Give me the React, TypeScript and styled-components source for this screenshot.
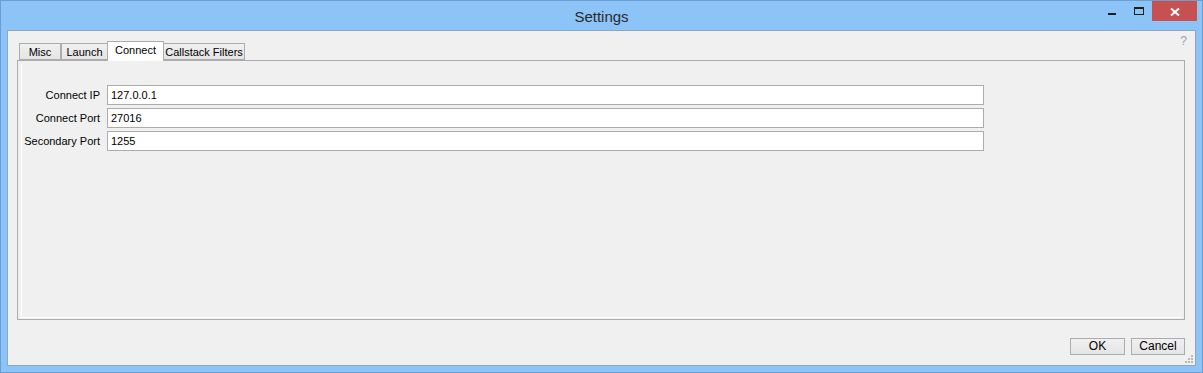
import React from "react";
import styled, { createGlobalStyle } from "styled-components";

const GlobalStyle = createGlobalStyle`
  html, body {
    margin: 0;
    padding: 0;
    background: #8cc4f8;
  }
  body {
    font-family: "Liberation Sans", Arial, sans-serif;
    font-size: 11px;
    color: #000;
  }
`;

const Window = styled.div`
  width: 1203px;
  height: 373px;
  box-sizing: border-box;
  border: 1px solid #6d9ed3;
  background: #8cc4f8;
  display: flex;
  flex-direction: column;
`;

const TitleBar = styled.div`
  height: 29px;
  display: grid;
  grid-template-columns: 1fr auto 1fr;
  align-items: center;
`;

const Title = styled.span`
  grid-column: 2;
  font-size: 15px;
  color: #2a2a2a;
  padding-top: 1px;
`;

const Caption = styled.div`
  grid-column: 3;
  justify-self: end;
  align-self: start;
  display: flex;
  margin-right: 5px;
`;

const CaptionButton = styled.div<{ w: number; close?: boolean }>`
  width: ${({ w }) => w}px;
  height: 20px;
  background: ${({ close }) => (close ? "#c75050" : "transparent")};
  display: flex;
  svg { display: block; }
`;

const Client = styled.div`
  flex: 1;
  margin: 0 6px 6px;
  border: 1px solid #8fa6be;
  background: #f0f0f0;
  position: relative;
  display: flex;
  flex-direction: column;
  padding: 10px 10px 0 9px;
`;

const Help = styled.span`
  position: absolute;
  top: 3px;
  right: 8px;
  font-size: 12px;
  color: #9aa0a8;
`;

const TabStrip = styled.div`
  display: flex;
  align-items: flex-end;
  height: 19px;
  padding-left: 2px;
  position: relative;
  z-index: 1;
`;

const Tab = styled.div<{ w: number; active?: boolean; overlap?: boolean }>`
  box-sizing: border-box;
  width: ${({ w }) => w}px;
  height: ${({ active }) => (active ? 20 : 17)}px;
  margin-left: ${({ overlap }) => (overlap ? -1 : 0)}px;
  margin-bottom: ${({ active }) => (active ? -1 : 0)}px;
  border: 1px solid #acacac;
  border-bottom: ${({ active }) => (active ? "none" : "1px solid #acacac")};
  background: ${({ active }) =>
    active ? "#ffffff" : "linear-gradient(#f0f0f0, #e5e5e5)"};
  position: relative;
  z-index: ${({ active }) => (active ? 2 : 1)};
  display: flex;
  justify-content: center;
  align-items: ${({ active }) => (active ? "flex-start" : "center")};
  padding-top: ${({ active }) => (active ? 2 : 1)}px;
  font-size: 11px;
  color: #000;
  white-space: nowrap;
`;

const Panel = styled.div`
  box-sizing: border-box;
  height: 260px;
  border: 1px solid #acacac;
  background: #f0f0f0;
  display: flex;
`;

const PageBody = styled.div`
  flex: 1;
  margin: 3px 3px 1px 3px;
  border-left: 1px solid #ffffff;
  border-bottom: 1px solid #ffffff;
  padding: 21px 0 0 0;
`;

const Form = styled.div`
  display: grid;
  grid-template-columns: 78px 877px;
  column-gap: 7px;
  row-gap: 3px;
  align-items: center;
`;

const Label = styled.label`
  text-align: right;
  white-space: nowrap;
  font-size: 11px;
  color: #000;
`;

const Input = styled.div`
  box-sizing: border-box;
  height: 20px;
  border: 1px solid #acacac;
  background: #fff;
  padding: 0 0 0 3px;
  display: flex;
  align-items: center;
  font-size: 11px;
  color: #000;
`;

const Footer = styled.div`
  display: flex;
  justify-content: flex-end;
  gap: 6px;
  margin-top: 18px;
`;

const Button = styled.button<{ w: number }>`
  box-sizing: border-box;
  width: ${({ w }) => w}px;
  height: 17px;
  border: 1px solid #acacac;
  background: linear-gradient(#f0f0f0, #e5e5e5);
  font-family: "Liberation Sans", Arial, sans-serif;
  font-size: 12px;
  color: #000;
  padding: 0;
  line-height: 15px;
`;

const Grip = styled.svg`
  position: absolute;
  right: 1px;
  bottom: 1px;
`;

const tabs = [
  { label: "Misc", w: 42 },
  { label: "Launch", w: 47 },
  { label: "Connect", w: 57, active: true, overlap: true },
  { label: "Callstack Filters", w: 82, overlap: true },
];

const fields = [
  { label: "Connect IP", value: "127.0.0.1" },
  { label: "Connect Port", value: "27016" },
  { label: "Secondary Port", value: "1255" },
];

export default function App() {
  return (
    <>
      <GlobalStyle />
      <Window>
        <TitleBar>
          <Title>Settings</Title>
          <Caption>
            <CaptionButton w={26}>
              <svg width="26" height="20">
                <rect x="9" y="12" width="8" height="2" fill="#1e1e1e" />
              </svg>
            </CaptionButton>
            <CaptionButton w={27}>
              <svg width="27" height="20">
                <rect x="9.5" y="6.5" width="9" height="7" fill="none" stroke="#1e1e1e" />
                <rect x="9" y="6" width="10" height="2" fill="#1e1e1e" />
              </svg>
            </CaptionButton>
            <CaptionButton w={45} close>
              <svg width="45" height="20">
                <path d="M19 7.5 L27 14.5 M27 7.5 L19 14.5" stroke="#fff" strokeWidth="2" />
              </svg>
            </CaptionButton>
          </Caption>
        </TitleBar>
        <Client>
          <Help>?</Help>
          <TabStrip>
            {tabs.map((t) => (
              <Tab key={t.label} w={t.w} active={t.active} overlap={t.overlap}>
                {t.label}
              </Tab>
            ))}
          </TabStrip>
          <Panel>
            <PageBody>
              <Form>
                {fields.map((f) => (
                  <React.Fragment key={f.label}>
                    <Label>{f.label}</Label>
                    <Input>{f.value}</Input>
                  </React.Fragment>
                ))}
              </Form>
            </PageBody>
          </Panel>
          <Footer>
            <Button w={55}>OK</Button>
            <Button w={54}>Cancel</Button>
          </Footer>
          <Grip width="9" height="9">
            <rect x="6" y="0" width="2" height="2" fill="#b8b8b8" />
            <rect x="3" y="3" width="2" height="2" fill="#b8b8b8" />
            <rect x="6" y="3" width="2" height="2" fill="#b8b8b8" />
            <rect x="0" y="6" width="2" height="2" fill="#b8b8b8" />
            <rect x="3" y="6" width="2" height="2" fill="#b8b8b8" />
            <rect x="6" y="6" width="2" height="2" fill="#b8b8b8" />
          </Grip>
        </Client>
      </Window>
    </>
  );
}
